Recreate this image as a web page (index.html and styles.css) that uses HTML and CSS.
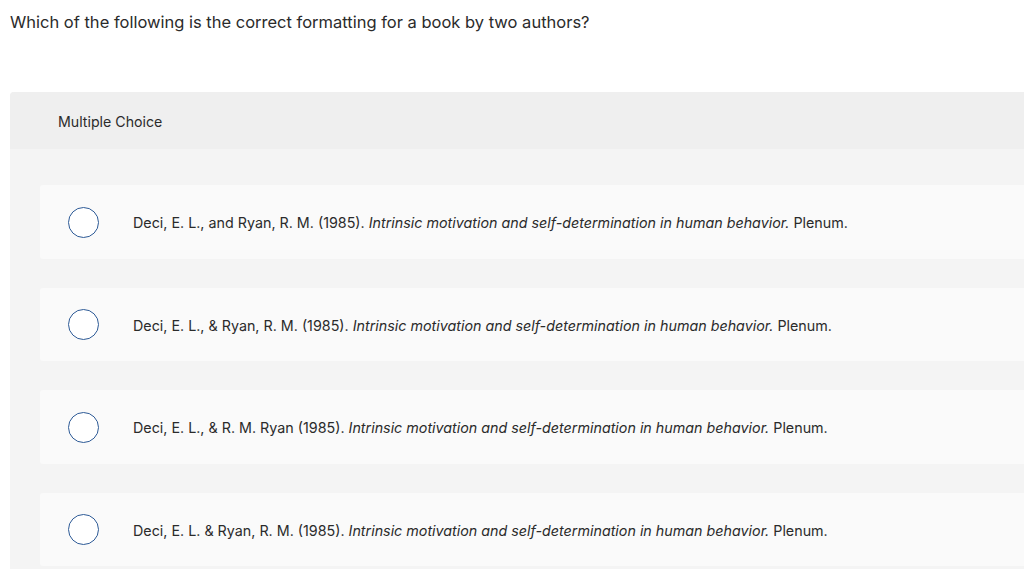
FILE: index.html
```html
<!DOCTYPE html>
<html>
<head>
<meta charset="utf-8">
<link rel="stylesheet" href="styles.css">
</head>
<body>
<p class="question">Which of the following is the correct formatting for a book by two authors?</p>
<section class="panel">
  <div class="panel-head">Multiple Choice</div>
  <div class="options">
    <div class="option"><span class="radio"></span><span class="text">Deci, E. L., and Ryan, R. M. (1985). <i>Intrinsic motivation and self-determination in human behavior.</i> Plenum.</span></div>
    <div class="option"><span class="radio"></span><span class="text">Deci, E. L., &amp; Ryan, R. M. (1985). <i>Intrinsic motivation and self-determination in human behavior.</i> Plenum.</span></div>
    <div class="option"><span class="radio"></span><span class="text">Deci, E. L., &amp; R. M. Ryan (1985). <i>Intrinsic motivation and self-determination in human behavior.</i> Plenum.</span></div>
    <div class="option"><span class="radio"></span><span class="text">Deci, E. L. &amp; Ryan, R. M. (1985). <i>Intrinsic motivation and self-determination in human behavior.</i> Plenum.</span></div>
  </div>
</section>
</body>
</html>
```
FILE: styles.css
```css
html, body {
  margin: 0;
  padding: 0;
  background: #ffffff;
  font-family: Inter, "Open Sans", sans-serif;
  color: #2b2b2b;
}
.question {
  margin: 0;
  padding: 12px 0 0 10px;
  font-size: 16.5px;
  line-height: 20px;
  height: 80px;
  box-sizing: border-box;
}
.panel {
  margin-left: 10px;
  background: #f4f4f4;
  border-top-left-radius: 4px;
  height: 477px;
}
.panel-head {
  background: #efefef;
  border-top-left-radius: 4px;
  height: 57px;
  box-sizing: border-box;
  padding: 21px 0 0 48px;
  font-size: 14.2px;
  line-height: 18px;
  margin-top: 12px;
}
.options {
  padding: 36px 0 0 30px;
  display: flex;
  flex-direction: column;
  gap: 29px;
}
.option {
  background: #fafafa;
  height: 73.5px;
  display: flex;
  align-items: center;
  border-top-left-radius: 3px;
  border-bottom-left-radius: 3px;
}
.radio {
  width: 29px;
  height: 29px;
  border: 1.5px solid #2d5a96;
  border-radius: 50%;
  background: #ffffff;
  margin-left: 28px;
  margin-right: 34px;
  margin-top: 1px;
  flex: none;
}
.text {
  font-size: 14.3px;
  line-height: 18px;
  padding-top: 3px;
  color: #2b2b2b;
}
```
